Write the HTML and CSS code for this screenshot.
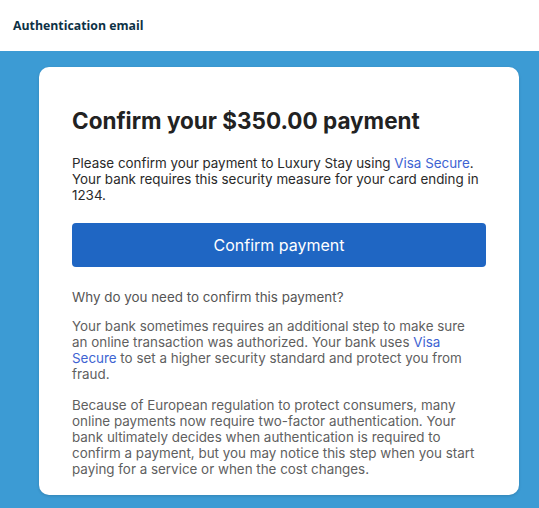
FILE: index.html
```html
<!DOCTYPE html>
<html lang="en">
<head>
    <meta charset="UTF-8">
    <meta name="viewport" content="width=device-width, initial-scale=1.0">
    <title>Authentication email</title>
    <link rel="stylesheet" href="styles.css">
</head>
<body>

    <header class="topbar">
        <h1>Authentication email</h1>
    </header>

    <main class="stage">
        <div class="card">
            <h2>Confirm your $350.00 payment</h2>
            <p class="lead">Please confirm your payment to Luxury Stay using <a href="#">Visa Secure</a>. Your bank requires this security measure for your card ending in 1234.</p>

            <button class="confirm">Confirm payment</button>

            <p class="question">Why do you need to confirm this payment?</p>
            <p class="info">Your bank sometimes requires an additional step to make sure an&nbsp;online transaction was authorized. Your bank uses <a href="#">Visa Secure</a> to set a higher security standard and protect you from fraud.</p>
            <p class="info">Because of European regulation to protect consumers, many online&nbsp;payments now require two-factor authentication. Your bank ultimately decides when authentication is required to confirm a payment, but you may notice this step when you start paying for a service or when the cost changes.</p>
        </div>
    </main>

</body>
</html>
```

FILE: styles.css
```css
body {
    margin: 0;
    font-family: 'Inter', 'Liberation Sans', sans-serif;
    background-color: #3c9bd4;
}
.topbar {
    background-color: #ffffff;
    height: 51px;
    padding: 0 13px;
    display: flex;
    align-items: center;
}
.topbar h1 {
    margin: 0;
    font-family: 'Open Sans', sans-serif;
    font-size: 12.3px;
    font-weight: 700;
    color: #0d3145;
}
.stage {
    padding: 16px 20px 13px 39px;
}
.card {
    width: 414px;
    padding: 40px 33px 18px;
    background-color: #ffffff;
    border-radius: 10px;
    box-shadow: 0px 1px 3px rgba(0, 0, 0, 0.15);
}
.card h2 {
    margin: 0 0 20px;
    font-size: 22.5px;
    font-weight: 700;
    color: #222222;
    line-height: 28px;
}
.card p {
    margin: 0;
    font-size: 13.4px;
    line-height: 16px;
}
.card a {
    color: #3e63d2;
    text-decoration: none;
}
.lead {
    color: #2a2a2a;
}
.confirm {
    display: block;
    width: 100%;
    height: 44px;
    margin: 20px 0 22px;
    border: none;
    border-radius: 4px;
    background-color: #1f66c3;
    color: #ffffff;
    font-family: inherit;
    font-size: 16px;
    cursor: pointer;
}
.question {
    color: #555555;
}
.card .question {
    margin-bottom: 13px;
}
.card .info {
    color: #5f5f5f;
    margin-bottom: 15px;
}
.card .info:last-child {
    margin-bottom: 0;
}
```
